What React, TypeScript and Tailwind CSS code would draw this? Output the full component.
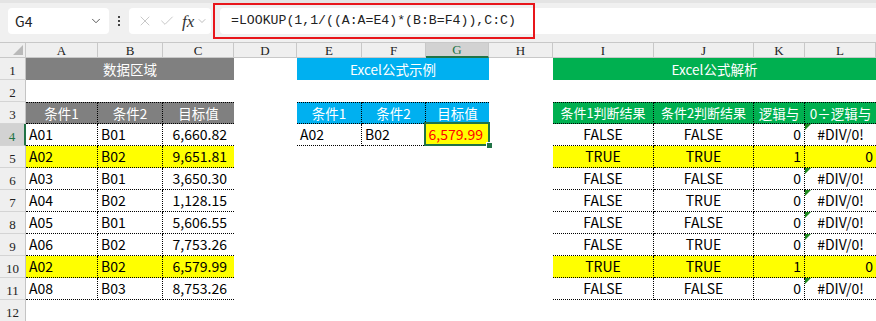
import React from 'react';
import { ChevronDown, X, Check } from 'lucide-react';

type CellProps = { className?: string; children?: React.ReactNode };

function Cell({ className = '', children }: CellProps) {
  return (
    <div className={`flex items-center overflow-hidden whitespace-nowrap ${className}`}>
      {children}
    </div>
  );
}

const letters = ['A', 'B', 'C', 'D', 'E', 'F', 'G', 'H', 'I', 'J', 'K', 'L'];

const leftRows = [
  { a: 'A01', b: 'B01', c: '6,660.82', hit: false },
  { a: 'A02', b: 'B02', c: '9,651.81', hit: true },
  { a: 'A03', b: 'B01', c: '3,650.30', hit: false },
  { a: 'A04', b: 'B02', c: '1,128.15', hit: false },
  { a: 'A05', b: 'B01', c: '5,606.55', hit: false },
  { a: 'A06', b: 'B02', c: '7,753.26', hit: false },
  { a: 'A02', b: 'B02', c: '6,579.99', hit: true },
  { a: 'A08', b: 'B03', c: '8,753.26', hit: false },
];

const rightRows = [
  { i: 'FALSE', j: 'FALSE', k: '0' },
  { i: 'TRUE', j: 'TRUE', k: '1' },
  { i: 'FALSE', j: 'FALSE', k: '0' },
  { i: 'FALSE', j: 'TRUE', k: '0' },
  { i: 'FALSE', j: 'FALSE', k: '0' },
  { i: 'FALSE', j: 'TRUE', k: '0' },
  { i: 'TRUE', j: 'TRUE', k: '1' },
  { i: 'FALSE', j: 'FALSE', k: '0' },
];

const dotBR = 'border-b border-r border-dotted border-black';
const dotB = 'border-b border-dotted border-black';
const dotTBR = 'border-t border-b border-r border-dotted border-black';
const dotTB = 'border-t border-b border-dotted border-black';

function RowHead({ n, active = false }: { n: number; active?: boolean }) {
  return (
    <div
      className={
        active
          ? 'flex items-end justify-center pb-[2px] bg-[#d2d2d2] text-[#217346] border-b border-[#d4d4d4] border-r-2 border-r-[#217346] font-["Liberation_Serif",serif] text-[13px] leading-none'
          : 'flex items-end justify-center pb-[2px] bg-[#efefef] text-[#222] border-b border-[#d4d4d4] border-r border-r-[#c4c4c4] font-["Liberation_Serif",serif] text-[13px] leading-none'
      }
    >
      {n}
    </div>
  );
}

function ErrFlag() {
  return (
    <div className="absolute left-0 top-0 h-0 w-0 border-t-[6px] border-t-[#1f8a1f] border-r-[6px] border-r-transparent" />
  );
}

export default function App() {
  return (
    <div className="h-[321px] w-[876px] overflow-hidden bg-white font-['Noto_Sans_CJK_SC','Noto_Sans',sans-serif] text-[14px] text-black">
      {/* formula bar */}
      <div className="relative flex h-[42px] items-center border-t-[3px] border-[#e4e4e4] bg-[#f0f0f0] pb-[3px]">
        <div className="ml-[8px] flex h-[26px] w-[101px] items-center justify-between rounded-[4px] bg-white pl-[7px] pr-[6px] text-[14px] text-[#222]">
          <span>G4</span>
          <ChevronDown size={14} strokeWidth={1.5} className="text-[#444]" />
        </div>
        <div className="mx-[9px] flex flex-col gap-[2px]">
          <div className="h-[2px] w-[2px] bg-[#444]" />
          <div className="h-[2px] w-[2px] bg-[#444]" />
          <div className="h-[2px] w-[2px] bg-[#444]" />
        </div>
        <div className="flex h-[26px] w-[82px] items-center rounded-[4px] bg-white pl-[8px]">
          <X size={16} strokeWidth={1.1} className="text-[#b4b4b4]" />
          <Check size={16} strokeWidth={1.1} className="ml-[6px] text-[#b4b4b4]" />
          <span className="ml-[7px] font-['Liberation_Serif',serif] text-[17px] italic leading-none text-[#333]">fx</span>
          <ChevronDown size={12} strokeWidth={1.3} className="ml-[2px] text-[#999]" />
        </div>
        <div className="ml-[9px] flex h-[26px] flex-1 items-center rounded-l-[4px] bg-white pl-[11px] font-['Liberation_Mono',monospace] text-[13.2px] text-[#222]">
          =LOOKUP(1,1/((A:A=E4)*(B:B=F4)),C:C)
        </div>
        {/* red annotation box */}
        <div className="pointer-events-none absolute left-[213px] top-0 h-[36px] w-[322px] border-2 border-[#e8161b]" />
      </div>

      {/* sheet */}
      <div className="grid grid-cols-[26px_72px_65px_71px_63px_65px_64px_63px_64px_101px_100px_51px_71px] grid-rows-[16px_repeat(12,22px)]">
        {/* column header */}
        <div className="relative border-b border-r border-t border-[#c8c8c8] bg-[#efefef]">
          <div className="absolute bottom-[2px] right-[2px] h-0 w-0 border-b-[10px] border-l-[10px] border-b-[#b9b9b9] border-l-transparent" />
        </div>
        {letters.map((l) =>
          l === 'G' ? (
            <div
              key={l}
              className="flex items-center justify-center border-b-2 border-r border-t border-b-[#217346] border-r-[#c8c8c8] border-t-[#c8c8c8] bg-[#d2d2d2] font-['Liberation_Serif',serif] text-[13px] leading-none text-[#217346]"
            >
              {l}
            </div>
          ) : (
            <div
              key={l}
              className="flex items-center justify-center border-b border-r border-t border-[#c8c8c8] bg-[#efefef] font-['Liberation_Serif',serif] text-[13px] leading-none text-[#222]"
            >
              {l}
            </div>
          )
        )}

        {/* row 1 */}
        <RowHead n={1} />
        <Cell className="col-span-3 justify-center bg-[#808080] text-[13.5px] text-white">数据区域</Cell>
        <Cell />
        <Cell className="col-span-3 justify-center bg-[#00b0f0] text-[13.5px] text-white">Excel公式示例</Cell>
        <Cell />
        <Cell className="col-span-4 justify-center bg-[#00b050] text-[13.5px] text-white">Excel公式解析</Cell>

        {/* row 2 */}
        <RowHead n={2} />
        <Cell className="col-span-12" />

        {/* row 3 */}
        <RowHead n={3} />
        <Cell className={`justify-center bg-[#808080] text-[13.5px] text-white ${dotTBR}`}>条件1</Cell>
        <Cell className={`justify-center bg-[#808080] text-[13.5px] text-white ${dotTBR}`}>条件2</Cell>
        <Cell className={`justify-center bg-[#808080] text-[13.5px] text-white ${dotTB}`}>目标值</Cell>
        <Cell />
        <Cell className={`justify-center bg-[#00b0f0] text-[13.5px] text-white ${dotTBR}`}>条件1</Cell>
        <Cell className={`justify-center bg-[#00b0f0] text-[13.5px] text-white ${dotTBR}`}>条件2</Cell>
        <Cell className={`justify-center bg-[#00b0f0] text-[13.5px] text-white ${dotTB}`}>目标值</Cell>
        <Cell />
        <Cell className={`justify-center bg-[#00b050] text-[13px] text-white ${dotTBR}`}>条件1判断结果</Cell>
        <Cell className={`justify-center bg-[#00b050] text-[13px] text-white ${dotTBR}`}>条件2判断结果</Cell>
        <Cell className={`justify-center bg-[#00b050] text-[13.5px] text-white ${dotTBR}`}>逻辑与</Cell>
        <Cell className={`justify-center bg-[#00b050] text-[13.5px] text-white ${dotTB}`}>0÷逻辑与</Cell>

        {/* rows 4-11 */}
        {leftRows.map((r, idx) => {
          const n = idx + 4;
          const rr = rightRows[idx];
          const yellow = r.hit ? 'bg-[#ffff00]' : '';
          return (
            <React.Fragment key={n}>
              <RowHead n={n} active={n === 4} />
              <Cell className={`pl-[3px] ${yellow} ${dotBR}`}>{r.a}</Cell>
              <Cell className={`pl-[3px] ${yellow} ${dotBR}`}>{r.b}</Cell>
              <Cell className={`justify-end pr-[7px] ${yellow} ${dotB}`}>{r.c}</Cell>
              <Cell />
              {n === 4 ? (
                <>
                  <Cell className={`pl-[3px] ${dotBR}`}>A02</Cell>
                  <Cell className={`pl-[3px] ${dotBR}`}>B02</Cell>
                  <div className={`relative flex items-center justify-end bg-[#ffff00] pr-[6px] text-[#ff0000] ${dotB}`}>
                    6,579.99
                    <div className="absolute -bottom-[1px] -left-[2px] -right-[1px] -top-[2px] z-10 border-2 border-[#217346]" />
                    <div className="absolute -bottom-[4px] -right-[4px] z-20 h-[7px] w-[7px] border border-white bg-[#217346]" />
                  </div>
                </>
              ) : (
                <>
                  <Cell />
                  <Cell />
                  <Cell />
                </>
              )}
              <Cell />
              <Cell className={`justify-center ${yellow} ${dotBR}`}>{rr.i}</Cell>
              <Cell className={`justify-center ${yellow} ${dotBR}`}>{rr.j}</Cell>
              <Cell className={`justify-end pr-[3px] ${yellow} ${dotBR}`}>{rr.k}</Cell>
              {rr.k === '1' ? (
                <Cell className={`justify-end pr-[3px] ${yellow} ${dotB}`}>0</Cell>
              ) : (
                <div className={`relative flex items-center justify-center ${dotB}`}>
                  <ErrFlag />
                  #DIV/0!
                </div>
              )}
            </React.Fragment>
          );
        })}

        {/* row 12 */}
        <RowHead n={12} />
        <Cell className="col-span-12" />
      </div>
    </div>
  );
}
